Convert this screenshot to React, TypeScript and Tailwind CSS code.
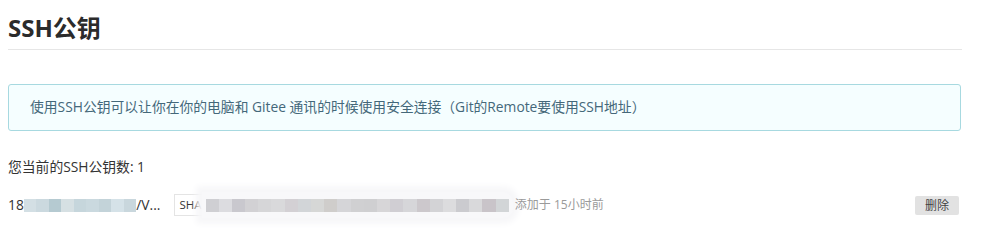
const nameBlocks = ["#d3dfe4", "#cbd9df", "#b5cad1", "#d6e0e3", "#c6d6dc", "#cad9df", "#c3d3d9", "#d5e2e8", "#c9d7dd"];
const shaBlocks = [
  "#cfcfd3", "#dcdce0", "#c9c8ce", "#d2d1d4", "#d6d6d8", "#d9d9db", "#d3d0d4", "#d2d5d8",
  "#d6d7d6", "#cfcdcb", "#d5d5d8", "#d0d0d2", "#cfcfd1", "#d7d6d8", "#d0ced3", "#d6d6d9",
  "#ccc8cc", "#d3d3d6", "#dcdcde", "#cbcbcf", "#d9d9db", "#c9c4c9", "#d2d5d7",
];

export default function App() {
  return (
    <div className="h-[244px] w-[1006px] bg-white px-2 text-[13.8px] text-[#333] [font-family:'Open_Sans','Noto_Sans_CJK_SC',sans-serif]">
      {/* Header */}
      <div className="w-[954px] border-b border-[#e6e6e6] pt-[13px] pb-[6px]">
        <h1 className="text-[24px] font-bold leading-[30px] text-[#2b2b2b]">SSH公钥</h1>
      </div>

      {/* Info */}
      <div className="mt-[34px] flex h-[47px] w-[953px] items-center rounded-[3px] border border-[#a7d9e0] bg-[#f5feff] pl-[21px] text-[#44687a]">
        使用SSH公钥可以让你在你的电脑和 Gitee 通讯的时候使用安全连接（Git的Remote要使用SSH地址）
      </div>

      <p className="mt-[26px] leading-[20px]">您当前的SSH公钥数: 1</p>

      {/* Key row */}
      <div className="mt-[17px] flex h-[22px] w-[951px] items-center">
        <div className="flex items-center">
          <span>18</span>
          <span className="flex h-[13px] blur-[0.5px]">
            {nameBlocks.map((c, i) => (
              <span key={i} className="h-full w-[12.5px]" style={{ backgroundColor: c }} />
            ))}
          </span>
          <span>/V...</span>
        </div>
        <div className="ml-[14px] flex h-[22px] items-center border border-[#e4e4e4] bg-white pl-[4px] text-[11.5px]">
          <span>SHA</span>
          <span className="-mr-[4px] flex h-[26px] items-center rounded-r-[10px] bg-[#f8f8fa] px-[4px] shadow-[0_0_6px_6px_#f7f7f9]">
            {shaBlocks.map((c, i) => (
              <span key={i} className="h-[13px] w-[13.2px]" style={{ backgroundColor: c }} />
            ))}
          </span>
        </div>
        <span className="ml-[5px] text-[12px] text-[#9a9a9a]">添加于 15小时前</span>
        <button className="ml-auto h-[19px] rounded-[2px] bg-[#e2e2e2] px-[10px] text-[12px] leading-[19px] text-[#444]">
          删除
        </button>
      </div>
    </div>
  );
}
